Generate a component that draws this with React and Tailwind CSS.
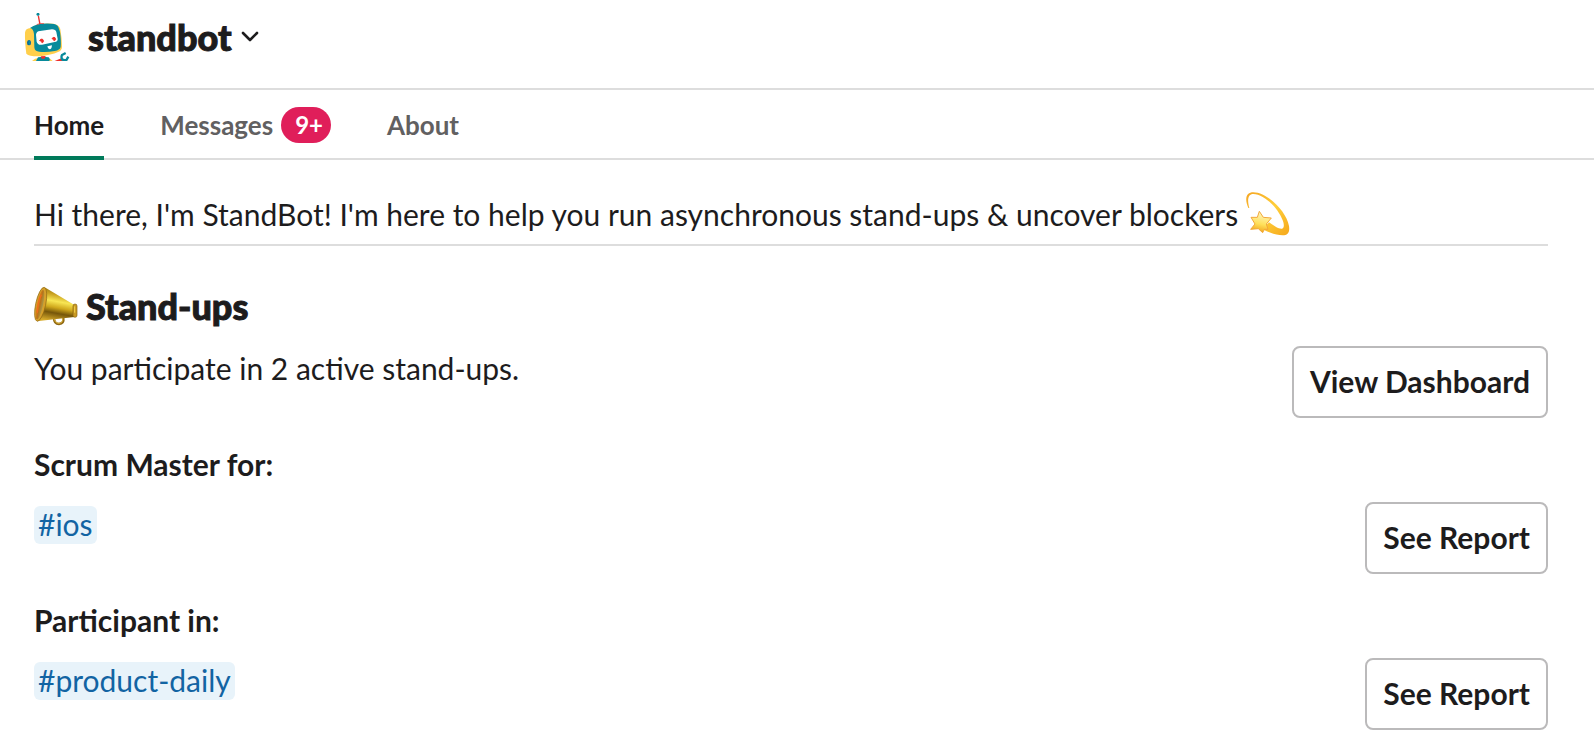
import { useState } from "react";

const tabs = [
  { id: "home", label: "Home" },
  { id: "messages", label: "Messages", badge: "9+" },
  { id: "about", label: "About" },
];

const sections = [
  { title: "Scrum Master for:", channel: "#ios" },
  { title: "Participant in:", channel: "#product-daily" },
];

function RobotAvatar() {
  return (
    <svg className="size-12 shrink-0" viewBox="24 27 144 144" aria-hidden="true">
      {/* antenna */}
      <path d="M73 35 L78 62" stroke="#ee2f2b" strokeWidth="4" />
      <circle cx="72" cy="31" r="4.5" fill="#078a9b" />
      {/* head */}
      <path
        d="M33 86 Q34 73 50 72 Q72 56 118 59 Q136 62 139 76 Q144 104 144 128 Q144 139 132 144 Q112 153 78 157 Q46 158 37 149 Q32 112 33 86Z"
        fill="#ffcf4b"
      />
      <path
        d="M48 72 Q70 56 112 59 Q130 60 133 69 L138 84 Q142 112 140 129 Q138 138 122 141 Q98 145 76 143 Q62 143 61 130 L60 90 Q58 74 48 72Z"
        fill="#078a9b"
      />
      <path d="M68 62 Q78 56 90 59" stroke="#ee2f2b" strokeWidth="2" fill="none" />
      <path
        d="M66 92 Q67 82 78 81 L114 76 Q125 76 127 84 L131 104 Q132 112 122 114 L84 122 Q71 124 68 113Z"
        fill="#fff"
      />
      <path
        d="M77 110 Q80 103 86 106 Q91 112 86 116 L83 115 Q85 111 80 111Z M114 104 Q117 98 123 101 Q127 107 122 110 L119 109 Q121 105 116 105Z"
        fill="#ee2f2b"
        stroke="#ee2f2b"
        strokeWidth="3"
      />
      <path d="M100 127 L114 124 Q113 136 107 136 Q101 134 100 127Z" fill="#fff" />
      <ellipse cx="45" cy="116" rx="6" ry="8" fill="#075f9b" />
      <ellipse cx="46" cy="116" rx="3" ry="7" fill="#078a9b" />
      {/* shoulders */}
      <path d="M54 171 Q62 162 74 162 L74 171Z" fill="#ffcf4b" />
      <path d="M66 171 L72 160 Q88 156 104 160 L112 171Z" fill="#078a9b" />
      <path d="M80 157 L95 156 L92 164 L83 164Z" fill="#ee2f2b" />
      <path d="M108 164 L116 171 L106 171Z" fill="#ffcf4b" />
      {/* arm and claw */}
      <path d="M122 171 L142 163 L147 171Z" fill="#ee2f2b" />
      <path
        d="M155 147 L144 153 Q141 159 144 166 Q152 171 158 167 L163 158"
        stroke="#078a9b"
        strokeWidth="7"
        fill="none"
      />
    </svg>
  );
}

function ChevronDown() {
  return (
    <svg className="h-3 w-5" viewBox="0 0 20 12" fill="none" aria-hidden="true">
      <path d="M3 2 L10 9 L17 2" stroke="#1d1c1d" strokeWidth="2.6" strokeLinecap="round" strokeLinejoin="round" />
    </svg>
  );
}

function DizzyIcon() {
  return (
    <svg className="size-11 shrink-0" viewBox="0 0 132 132" role="img" aria-label="dizzy">
      <defs>
        <linearGradient id="trail" x1="0" y1="0" x2="1" y2="1">
          <stop offset="0" stopColor="#f5a623" />
          <stop offset="0.5" stopColor="#ffcf3a" />
          <stop offset="1" stopColor="#f5a81c" />
        </linearGradient>
        <linearGradient id="star" x1="0.6" y1="0" x2="0.4" y2="1">
          <stop offset="0" stopColor="#fff8c9" />
          <stop offset="0.6" stopColor="#ffe05a" />
          <stop offset="1" stopColor="#f0a21a" />
        </linearGradient>
      </defs>
      <path
        d="M7 48 C-6 18 2 1 22 1 C62 1 120 55 129 102 C132 121 125 130 110 130 C91 130 71 122 49 112 L69 91 C83 101 99 112 108 110 C116 107 114 95 110 85 C96 48 54 6 22 6 C6 6 3 24 10 48Z"
        fill="url(#trail)"
      />
      <path
        d="M40 58 L52 76 L76 78 L61 96 L66 112 L55 112 L50 122 L37 110 L14 112 L27 96 L15 76 L34 76Z"
        fill="url(#star)"
        stroke="#f2a83b"
        strokeWidth="3"
        strokeLinejoin="round"
      />
    </svg>
  );
}

function MegaphoneIcon() {
  return (
    <svg className="size-11 shrink-0" viewBox="0 0 132 132" role="img" aria-label="mega">
      <defs>
        {/* bands run along the cone, narrowing towards the mouthpiece */}
        <linearGradient id="horn" x1="0.6" y1="0" x2="0.4" y2="1">
          <stop offset="0" stopColor="#8a6a10" />
          <stop offset="0.22" stopColor="#c9a020" />
          <stop offset="0.42" stopColor="#f8e654" />
          <stop offset="0.6" stopColor="#d0a81c" />
          <stop offset="0.76" stopColor="#76560a" />
          <stop offset="1" stopColor="#d6aa2a" />
        </linearGradient>
        <linearGradient id="bell" x1="0" y1="0" x2="1" y2="0">
          <stop offset="0" stopColor="#e8851a" />
          <stop offset="0.5" stopColor="#b8741a" />
          <stop offset="1" stopColor="#a89a4a" />
        </linearGradient>
      </defs>
      <path d="M60 102 Q60 120 75 120 Q91 119 88 101" fill="none" stroke="#8f6812" strokeWidth="7" />
      <path d="M61 103 Q62 118 75 118 Q88 117 86 102" fill="none" stroke="#dcb038" strokeWidth="3" />
      <path d="M32 10 L120 62 L122 99 L14 111 Q10 108 14 80 Q19 18 32 10Z" fill="url(#horn)" />
      <ellipse cx="20" cy="61" rx="15" ry="52" transform="rotate(12 20 61)" fill="#d6a02a" stroke="#8f6812" strokeWidth="2" />
      <ellipse cx="18" cy="62" rx="9" ry="45" transform="rotate(12 18 62)" fill="url(#bell)" />
      <path d="M22 32 Q10 58 10 86" fill="none" stroke="#f06c1c" strokeWidth="4" />
      <rect x="117" y="60" width="12" height="40" rx="6" fill="#c99a24" stroke="#86600f" strokeWidth="2" />
      <path d="M122 67 V86" stroke="#f3d44b" strokeWidth="3" />
    </svg>
  );
}

function OutlineButton({ children }) {
  return (
    <button
      type="button"
      className="h-18 shrink-0 rounded-lg border-2 border-[#bbbabb] bg-white px-4 pb-0.5 text-[30px] font-bold whitespace-nowrap hover:bg-gray-50"
    >
      {children}
    </button>
  );
}

function App() {
  const [activeTab, setActiveTab] = useState("home");

  return (
    <div className="min-h-screen bg-white font-['Lato',sans-serif] text-[30px] leading-[44px] text-[#1d1c1d]">

      {/* HEADER */}
      <header className="flex items-start border-b-2 border-[#dddddd] px-[22px] pt-[13px] pb-[27px]">
        <RobotAvatar />
        <button
          type="button"
          className="ml-[18px] flex h-12 items-center gap-2 text-4xl font-black [-webkit-text-stroke:1px]"
        >
          <h1>standbot</h1>
          <ChevronDown />
        </button>
      </header>

      {/* TABS */}
      <nav className="flex h-[70px] gap-14 border-b-2 border-[#dddddd] px-[34px] text-[26px]">
        {tabs.map((tab) => (
          <button
            key={tab.id}
            type="button"
            onClick={() => setActiveTab(tab.id)}
            className={`
              -mb-0.5
              flex
              items-center
              gap-2
              border-b-4
              pt-1
              font-bold
              ${activeTab === tab.id ? "border-[#007a5a]" : "border-transparent text-[#616061]"}
            `}
          >
            {tab.label}
            {tab.badge && (
              <span className="flex h-9 items-center rounded-full bg-[#e01e5a] pr-2 pl-3.5 text-2xl font-bold text-white">
                {tab.badge}
              </span>
            )}
          </button>
        ))}
      </nav>

      <main className="pt-8 pr-[46px] pb-3.5 pl-[34px]">

        {/* GREETING */}
        <div className="flex items-center gap-2 border-b-2 border-[#dddddd] pb-2">
          <p>
            Hi there, I'm StandBot! I'm here to help you run asynchronous stand-ups &amp; uncover blockers
          </p>
          <DizzyIcon />
        </div>

        {/* STAND-UPS */}
        <h2 className="mt-[38px] mb-[18px] flex items-center gap-2 text-4xl leading-[44px] font-black [-webkit-text-stroke:1px]">
          <MegaphoneIcon />
          Stand-ups
        </h2>

        <div className="flex items-start justify-between gap-8">
          <p>You participate in 2 active stand-ups.</p>
          <OutlineButton>View Dashboard</OutlineButton>
        </div>

        {sections.map((section) => (
          <section key={section.channel} className="mt-6">
            <h3 className="mb-4 font-bold">{section.title}</h3>

            <div className="flex items-start justify-between gap-8">
              <p>
                <a href="#" className="rounded-md bg-[#e8f3fa] px-1 pb-0.5 text-[#1264a3]">
                  {section.channel}
                </a>
              </p>
              <OutlineButton>See Report</OutlineButton>
            </div>
          </section>
        ))}

      </main>
    </div>
  );
}

export default App;
